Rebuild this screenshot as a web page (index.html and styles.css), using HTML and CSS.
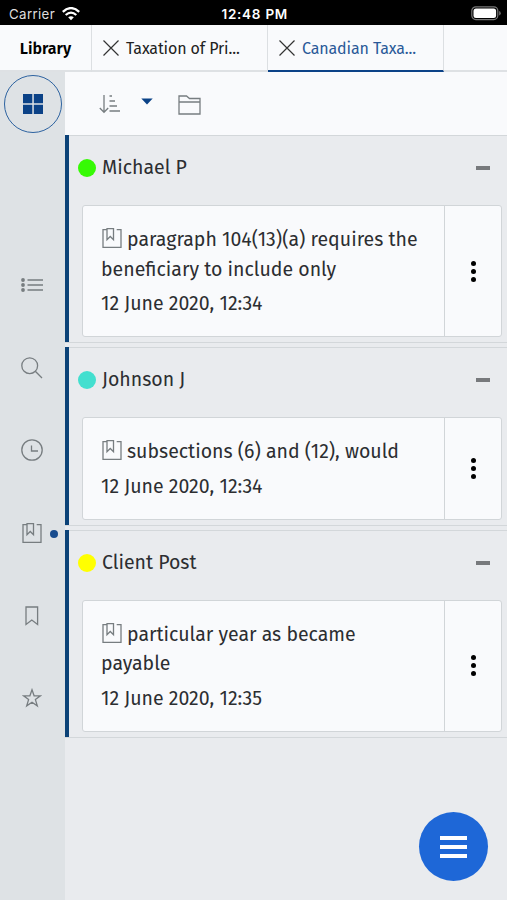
FILE: index.html
```html
<!DOCTYPE html>
<html lang="en">
<head>
<meta charset="utf-8">
<title>Annotations</title>
<link rel="stylesheet" href="styles.css">
</head>
<body>
<svg width="0" height="0" class="defs">
  <symbol id="note" viewBox="0 0 20 20"><path d="M5 1.700H1V19.300h18V1.700h-4.300M5 .7h6.500v11L8.250 8.500 5 11.700z"/></symbol>
  <symbol id="close" viewBox="0 0 16 16"><path d="M.5.5l15 15M15.500.5l-15 15"/></symbol>
</svg>
<header class="status">
  <div class="carrier"><span>Carrier</span>
    <svg width="18" height="14" viewBox="0 0 18 14"><path d="M.8 4.800Q9-2.600 17.200 4.800M3.700 8Q9 3.300 14.300 8"/><path class="solid" d="M6.200 10.300Q9 8 11.800 10.300L9 13.300z"/></svg>
  </div>
  <div class="clock">12:48 PM</div>
  <svg class="battery" width="30" height="15" viewBox="0 0 30 15"><rect x=".8" y=".8" width="26" height="12.800" rx="4"/><rect class="solid" x="2.500" y="2.500" width="22.600" height="9.400" rx="2.500"/><path class="cap" d="M28.200 5v4.500q1.500-.5 1.500-2.200T28.200 5z"/></svg>
</header>
<nav class="tabs">
  <div class="tab library"><span>Library</span></div>
  <div class="tab"><svg class="x"><use href="#close"/></svg><span>Taxation of Pri...</span></div>
  <div class="tab active"><svg class="x"><use href="#close"/></svg><span>Canadian Taxa...</span></div>
</nav>
<div class="body">
  <aside class="rail">
    <div class="home"><svg width="20" height="20" viewBox="0 0 20 20"><path d="M0 0h9.300v9.300H0zM10.800 0H20v9.300h-9.200zM0 10.800h9.300V20H0zM10.800 10.800H20V20h-9.200z"/></svg></div>
    <div class="tools">
      <div class="tool"><svg width="22" height="14" viewBox="0 0 22 14"><path d="M6.500 2H22M6.500 7H22M6.500 12H22" stroke-width="1.500"/><g fill="#777d80" stroke="none"><circle cx="2" cy="2" r="1.900"/><circle cx="2" cy="7" r="1.900"/><circle cx="2" cy="12" r="1.900"/></g></svg></div>
      <div class="tool"><svg width="22" height="22" viewBox="0 0 22 22"><circle cx="8.700" cy="8.700" r="7.900"/><path d="M14.300 14.300L21 21"/></svg></div>
      <div class="tool"><svg width="22" height="22" viewBox="0 0 22 22"><circle cx="11" cy="11" r="10.200"/><path d="M10.500 6.500v5.500H17"/></svg></div>
      <div class="tool"><svg width="20" height="20"><use href="#note"/></svg><i class="dot"></i></div>
      <div class="tool"><svg width="14" height="20" viewBox="0 0 14 20"><path d="M1 1h11.600v17.500L6.800 14 1 18.500z"/></svg></div>
      <div class="tool"><svg width="20" height="20" viewBox="0 0 20 20"><path d="M10 1.800l2.100 6h6.300l-5 3.800 1.900 6.300L10 14.200l-5.300 3.700 1.900-6.300-5-3.800h6.300z"/></svg></div>
    </div>
  </aside>
  <main class="content">
    <div class="toolbar">
      <svg width="22" height="20" viewBox="0 0 22 20"><path d="M5 1v17M.8 14L5 18.300 9.200 14" stroke-width="1.300"/><path d="M10.500 2H13M10.500 7h5.500M10.500 12H18M10.500 17H21" stroke-width="1.500"/></svg>
      <svg class="caret" width="12" height="7" viewBox="0 0 12 7"><path d="M.3.5h11.400L6 6.500z"/></svg>
      <svg class="folder" width="23" height="20" viewBox="0 0 23 20"><path d="M1 7V1h7.500l3 2.500H22V19H1V7h21"/></svg>
    </div>
    <div class="groups">
      <section class="group">
        <div class="head"><i class="bullet green"></i><span>Michael P</span><i class="minus"></i></div>
        <div class="card"><div class="text"><p><svg class="note"><use href="#note"/></svg>paragraph 104(13)(a) requires the<br>beneficiary to include only</p><time>12 June 2020, 12:34</time></div><div class="more"><i></i><i></i><i></i></div></div>
      </section>
      <section class="group">
        <div class="head"><i class="bullet teal"></i><span>Johnson J</span><i class="minus"></i></div>
        <div class="card"><div class="text"><p><svg class="note"><use href="#note"/></svg>subsections (6) and (12), would</p><time>12 June 2020, 12:34</time></div><div class="more"><i></i><i></i><i></i></div></div>
      </section>
      <section class="group">
        <div class="head"><i class="bullet yellow"></i><span>Client Post</span><i class="minus"></i></div>
        <div class="card"><div class="text"><p><svg class="note"><use href="#note"/></svg>particular year as became<br>payable</p><time>12 June 2020, 12:35</time></div><div class="more"><i></i><i></i><i></i></div></div>
      </section>
    </div>
  </main>
</div>
<button class="fab" aria-label="Menu"><i></i><i></i><i></i></button>
</body>
</html>
```
FILE: styles.css
```css
* { box-sizing: border-box; }
body { margin: 0; width: 507px; height: 900px; overflow: hidden; display: flex; flex-direction: column; background: #e9ebee; font-family: "Fira Sans", "Noto Sans", sans-serif; color: #2c2e31; }
svg { display: block; fill: none; stroke: #777d80; stroke-width: 1.300; flex: none; }
.defs { position: absolute; }
.status { height: 25px; background: #000; color: #fff; display: grid; grid-template-columns: 1fr auto 1fr; align-items: center; padding: 2px 6.500px 0 9px; font: 13px/20px Inter, sans-serif; flex: none; }
.carrier { display: flex; gap: 7px; align-items: center; color: #ddd; font-size: 13.300px; letter-spacing: .35px; }
.carrier svg { stroke: #fff; stroke-width: 2.300; }
.status .solid { fill: #fff; stroke: none; }
.status .cap { fill: #777; stroke: none; }
.clock { font-weight: 600; font-size: 13.500px; letter-spacing: .75px; }
.status .battery { justify-self: end; stroke: #777; stroke-width: 1.200; }
.tabs { height: 47px; flex: none; display: flex; background: #f9fafc; border-bottom: 2px solid #dee1e4; }
.tab { display: flex; align-items: center; width: 176px; height: 47px; padding: 0 0 1px 11px; border-right: 1px solid #dcdfe2; font-size: 16px; color: #222; letter-spacing: -.12px; white-space: nowrap; }
.tab.library { width: 92px; justify-content: center; padding-left: 0; font-weight: 600; letter-spacing: 0; color: #000; }
.x { width: 16px; height: 16px; stroke: #333; margin-right: 7px; stroke-width: 1.200; }
.tab.active { color: #2a5998; border-bottom: 2px solid #0b4287; padding: 1px 0 0 11px; }
.body { flex: 1; display: flex; min-height: 0; }
.rail { width: 65px; flex: none; background: #dee2e5; padding-top: 3px; }
.home { width: 58px; height: 58px; margin-left: 3.500px; border: 1.500px solid #2d62a0; border-radius: 50%; display: grid; place-items: center; }
.home svg { fill: #0b4287; stroke: none; }
.tools { padding-top: 110.500px; }
.tool { height: 82.700px; display: flex; align-items: center; justify-content: center; position: relative; padding-right: 1px; }
.dot { position: absolute; left: 50px; top: 38px; width: 8px; height: 8px; border-radius: 50%; background: #184c8e; }
.content { flex: 1; display: flex; flex-direction: column; }
.toolbar { height: 63px; background: #f9fafc; display: flex; align-items: center; padding: 0 0 0 33.500px; flex: none; }
.toolbar .caret { margin: 0 25px 5px 20.500px; fill: #0b4287; stroke: none; }
.toolbar .folder { margin-top: 3px; }
.groups { display: flex; flex-direction: column; gap: 4px; }
.group { border-top: 1px solid #d3d7da; border-bottom: 1px solid #d3d7da; padding: 0 5px 5px 13px; position: relative; background: #e9ebee; }
.group::before { content: ""; position: absolute; left: 0; top: -1px; bottom: 0; width: 4px; background: #0b4277; }
.head { height: 69px; display: flex; align-items: center; padding: 0 12.500px 5px 0; font-size: 19.500px; }
.head span { margin: 0 auto 1px 6px; }
.bullet { width: 18px; height: 18px; border-radius: 50%; }
.green { background: #36fa05; }
.teal { background: #43dfcf; }
.yellow { background: #ff0; }
.minus { width: 14px; height: 4px; background: #77797c; }
.card { margin-left: 4px; display: flex; background: #f9fafc; border: 1px solid #d1d5d8; border-radius: 3px; }
.text { flex: 1; padding: 19px 0 18px 18px; font-size: 19.500px; line-height: 29.500px; white-space: nowrap; }
.text p { margin: 0 0 5px; }
.note { display: inline-block; width: 20px; height: 20px; margin: 0 5.500px 0 .5px; vertical-align: -2px; }
time { display: block; line-height: 29px; }
.more { width: 57px; border-left: 1px solid #d1d5d8; display: flex; flex-direction: column; gap: 3px; align-items: center; justify-content: center; }
.more i { width: 5px; height: 5px; border-radius: 50%; background: #000; }
.fab { position: absolute; left: 418.500px; top: 812px; width: 69px; height: 69px; border: 0; border-radius: 50%; background: #1e67d7; display: flex; flex-direction: column; gap: 5px; align-items: center; justify-content: center; padding: 0; }
.fab i { width: 27px; height: 4px; background: #fff; }
```
